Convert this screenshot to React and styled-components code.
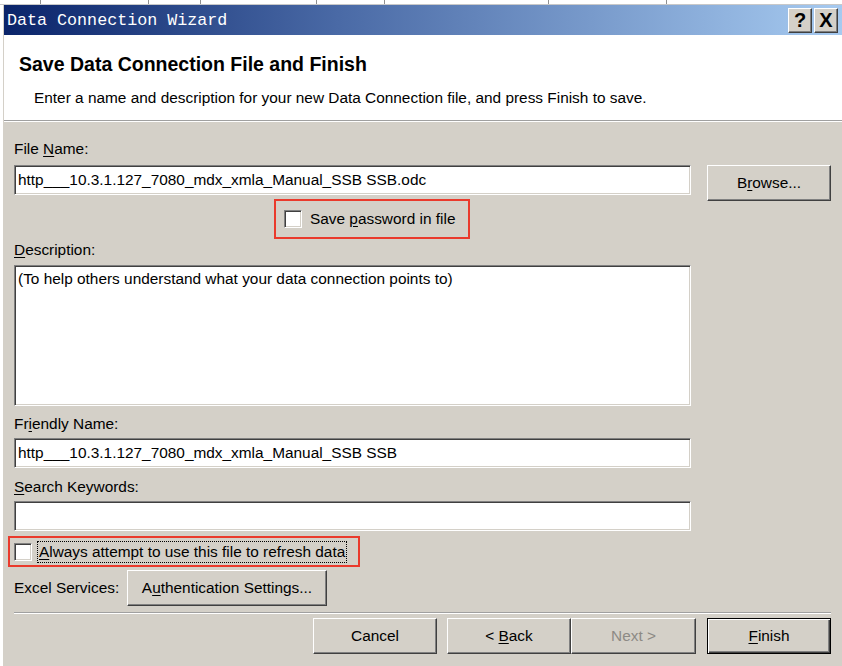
import React from 'react';
import styled, { createGlobalStyle, css } from 'styled-components';

const GlobalStyle = createGlobalStyle`
  html, body {
    margin: 0;
    padding: 0;
    background: #ffffff;
    overflow: hidden;
  }
  body {
    font-family: 'Liberation Sans', Arial, sans-serif;
  }
`;

const raised = css`
  border-top: 1px solid #ffffff;
  border-left: 1px solid #ffffff;
  border-right: 1px solid #404040;
  border-bottom: 1px solid #404040;
  box-shadow: inset -1px -1px 0 #808080;
`;

const sunken = css`
  border-top: 1px solid #808080;
  border-left: 1px solid #808080;
  border-right: 1px solid #ffffff;
  border-bottom: 1px solid #ffffff;
  box-shadow: inset 1px 1px 0 #404040, inset -1px -1px 0 #d4d0c8;
`;

const Page = styled.div`
  width: 842px;
  height: 666px;
  overflow: hidden;
  display: flex;
  flex-direction: column;
`;

const Backdrop = styled.div`
  height: 4px;
  flex-shrink: 0;
  border-bottom: 1px solid #c8c8c8;
  background:
    linear-gradient(90deg, transparent 40px, #909090 40px, #909090 41px, transparent 41px),
    linear-gradient(90deg, transparent 148px, #909090 148px, #909090 149px, transparent 149px),
    linear-gradient(90deg, transparent 200px, #909090 200px, #909090 201px, transparent 201px),
    linear-gradient(90deg, transparent 316px, #909090 316px, #909090 317px, transparent 317px),
    linear-gradient(90deg, transparent 384px, #909090 384px, #909090 385px, transparent 385px),
    linear-gradient(90deg, transparent 548px, #909090 548px, #909090 549px, transparent 549px),
    linear-gradient(90deg, transparent 666px, #909090 666px, #909090 667px, transparent 667px),
    #ffffff;
`;

const Window = styled.div`
  flex: 1;
  margin-left: 3px;
  display: flex;
  flex-direction: column;
  background: #d4d0c8;
  border-left: 1px solid #d4d0c8;
`;

const TitleBar = styled.div`
  height: 30px;
  flex-shrink: 0;
  display: flex;
  align-items: center;
  padding: 0 4px 0 3px;
  background: linear-gradient(90deg, #0a246a 0%, #4a6aa6 40%, #a6caf0 100%);
`;

const TitleText = styled.span`
  flex: 1;
  color: #ffffff;
  font-family: 'Liberation Mono', 'DejaVu Sans Mono', monospace;
  font-size: 16.7px;
`;

const CaptionButton = styled.div`
  width: 24px;
  height: 25px;
  margin-left: 2px;
  ${raised};
  background: #d4d0c8;
  display: flex;
  align-items: center;
  justify-content: center;
  font-family: 'Liberation Sans', Arial, sans-serif;
  font-weight: bold;
  font-size: 20px;
  color: #000000;
  box-sizing: border-box;
`;

const Header = styled.div`
  height: 86px;
  flex-shrink: 0;
  background: #ffffff;
  border-bottom: 1px solid #a0a0a0;
  box-shadow: 0 1px 0 #ffffff;
  box-sizing: border-box;
  padding: 16px 0 0 15px;
`;

const Heading = styled.div`
  font-family: 'Liberation Sans', Arial, sans-serif;
  font-weight: bold;
  font-size: 19.5px;
  color: #000000;
  line-height: 26px;
`;

const Subtitle = styled.div`
  margin: 10px 0 0 15px;
  font-size: 15.4px;
  line-height: 22px;
  color: #000000;
`;

const Body = styled.div`
  flex: 1;
  padding: 11px 10px 0 10px;
  display: flex;
  flex-direction: column;
  font-size: 15.4px;
  color: #000000;
`;

const Label = styled.div`
  line-height: 20px;
  height: 20px;
  margin-top: ${(p) => p.$top || 0}px;
  margin-bottom: ${(p) => p.$bottom || 0}px;
  u {
    text-underline-offset: 2px;
  }
`;

const FieldRow = styled.div`
  display: flex;
  align-items: flex-start;
  gap: 16px;
`;

const Field = styled.div`
  width: 677px;
  height: ${(p) => p.$height || 30}px;
  box-sizing: border-box;
  background: #ffffff;
  ${sunken};
  padding: ${(p) => (p.$multi ? '3px 3px' : '0 3px')};
  display: flex;
  align-items: ${(p) => (p.$multi ? 'flex-start' : 'center')};
  line-height: 20px;
  white-space: nowrap;
  flex-shrink: 0;
`;

const Button = styled.div`
  width: ${(p) => p.$width || 124}px;
  height: 36px;
  box-sizing: border-box;
  background: #d4d0c8;
  ${raised};
  display: flex;
  align-items: center;
  justify-content: center;
  white-space: pre;
  color: ${(p) => (p.$disabled ? '#8d8a85' : '#000000')};
  flex-shrink: 0;
  ${(p) =>
    p.$default &&
    css`
      border: 1px solid #000000;
      box-shadow: inset 1px 1px 0 #ffffff, inset -1px -1px 0 #404040,
        inset -2px -2px 0 #808080;
    `}
  u {
    text-underline-offset: 2px;
  }
`;

const Highlight = styled.div`
  border: 2px solid #ea3a2c;
  box-sizing: border-box;
  display: flex;
  align-items: center;
  gap: ${(p) => p.$gap || 7}px;
  width: ${(p) => p.$width}px;
  height: ${(p) => p.$height}px;
  padding-left: ${(p) => p.$padLeft}px;
  margin-left: ${(p) => p.$left}px;
  margin-top: ${(p) => p.$top || 0}px;
  flex-shrink: 0;
`;

const CheckBox = styled.div`
  width: 18px;
  height: 18px;
  box-sizing: border-box;
  background: #ffffff;
  ${sunken};
  flex-shrink: 0;
`;

const CheckLabel = styled.span`
  line-height: 20px;
  white-space: nowrap;
  padding: 0 1px;
  ${(p) =>
    p.$focused &&
    css`
      outline: 1px dotted #000000;
      outline-offset: 0;
    `}
  u {
    text-underline-offset: 2px;
  }
`;

const ServicesRow = styled.div`
  display: flex;
  align-items: center;
  margin-top: 3px;
`;

const ServicesLabel = styled.span`
  width: 113px;
  flex-shrink: 0;
`;

const Separator = styled.div`
  margin: 6px 0 0 0;
  width: 817px;
  border-top: 1px solid #a0a0a0;
  border-bottom: 1px solid #ffffff;
`;

const Footer = styled.div`
  display: flex;
  margin-top: 4px;
  padding-left: 299px;
`;

const Gap = styled.div`
  width: ${(p) => p.$w}px;
  flex-shrink: 0;
`;

function App() {
  return (
    <>
      <GlobalStyle />
      <Page>
        <Backdrop />
        <Window>
          <TitleBar>
            <TitleText>Data Connection Wizard</TitleText>
            <CaptionButton>?</CaptionButton>
            <CaptionButton>X</CaptionButton>
          </TitleBar>
          <Header>
            <Heading>Save Data Connection File and Finish</Heading>
            <Subtitle>
              Enter a name and description for your new Data Connection file,
              and press Finish to save.
            </Subtitle>
          </Header>
          <Body>
            <Label $top={7} $bottom={6}>
              File <u>N</u>ame:
            </Label>
            <FieldRow>
              <Field>http___10.3.1.127_7080_mdx_xmla_Manual_SSB SSB.odc</Field>
              <Button>
                B<u>r</u>owse...
              </Button>
            </FieldRow>
            <Highlight $width={196} $height={40} $left={260} $top={-2} $padLeft={8}>
              <CheckBox />
              <CheckLabel>
                Save <u>p</u>assword in file
              </CheckLabel>
            </Highlight>
            <Label $top={1} $bottom={5}>
              <u>D</u>escription:
            </Label>
            <Field $height={141} $multi>
              (To help others understand what your data connection points to)
            </Field>
            <Label $top={8} $bottom={4}>
              Fr<u>i</u>endly Name:
            </Label>
            <Field>http___10.3.1.127_7080_mdx_xmla_Manual_SSB SSB</Field>
            <Label $top={9} $bottom={4}>
              <u>S</u>earch Keywords:
            </Label>
            <Field />
            <Highlight $width={352} $height={31} $left={-6} $top={5} $padLeft={4} $gap={6}>
              <CheckBox />
              <CheckLabel $focused>
                <u>A</u>lways attempt to use this file to refresh data
              </CheckLabel>
            </Highlight>
            <ServicesRow>
              <ServicesLabel>Excel Services:</ServicesLabel>
              <Button $width={200}>
                A<u>u</u>thentication Settings...
              </Button>
            </ServicesRow>
            <Separator />
            <Footer>
              <Button>Cancel</Button>
              <Gap $w={10} />
              <Button>
                {'< '}
                <u>B</u>ack
              </Button>
              <Button $disabled $width={125}>Next &gt;</Button>
              <Gap $w={11} />
              <Button $default>
                <u>F</u>inish
              </Button>
            </Footer>
          </Body>
        </Window>
      </Page>
    </>
  );
}

export default App;
